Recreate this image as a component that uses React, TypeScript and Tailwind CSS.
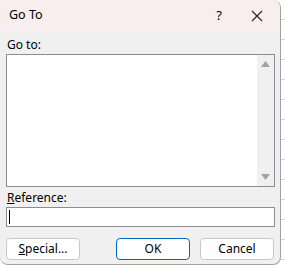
import React from "react";

export default function App() {
  return (
    <div
      className="relative w-[285px] h-[268px] bg-white overflow-hidden"
      style={{ fontFamily: '"Noto Sans", "Open Sans", sans-serif' }}
    >
      {/* excel grid sliver on the right */}
      <div className="absolute right-0 top-0 w-[5px] h-full flex flex-col">
        {Array.from({ length: 14 }).map((_, i) => (
          <div key={i} className="h-[20px] border-b border-[#d4d4d4] shrink-0" />
        ))}
      </div>
      {/* dialog */}
      <div className="relative w-[281px] h-[265px] bg-[#f0f0f0] border-r border-b border-[#a0a0a0] rounded-tr-[8px] rounded-br-[8px] rounded-bl-[8px] overflow-hidden flex flex-col text-[12px] text-black">
        <div className="h-[31px] bg-[#f9eeee] flex items-center shrink-0">
          <span className="ml-[9px] text-[12.5px]">Go To</span>
          <span className="ml-auto mr-[29px] text-[13px]">?</span>
          <svg width="12" height="12" viewBox="0 0 12 12" className="mr-[17px]">
            <path d="M1 1 L11 11 M11 1 L1 11" stroke="#222" strokeWidth="1.1" />
          </svg>
        </div>
        <div className="px-[6px] pt-[5px] flex flex-col">
          <div className="ml-[1px] h-[18px] leading-[18px]">Go to:</div>
          <div className="h-[133px] w-[269px] border border-[#8a8e92] bg-white flex">
            <div className="flex-1" />
            <div className="w-[17px] bg-[#f0f0f0] flex flex-col items-center justify-between py-[6px]">
              <svg width="9" height="6" viewBox="0 0 9 6">
                <path d="M0 6 L4.5 0 L9 6 Z" fill="#a3a3a3" />
              </svg>
              <svg width="9" height="6" viewBox="0 0 9 6">
                <path d="M0 0 L9 0 L4.5 6 Z" fill="#a3a3a3" />
              </svg>
            </div>
          </div>
          <div className="ml-[1px] mt-[2px] h-[18px] leading-[18px]">
            <span className="underline">R</span>eference:
          </div>
          <div className="h-[20px] w-[269px] border border-[#8a8e92] bg-white flex items-center">
            <div className="ml-[2px] w-[1px] h-[14px] bg-black" />
          </div>
          <div className="mt-[11px] flex items-center">
            <div className="w-[74px] h-[22px] rounded-[4px] border border-[#c8c8c8] bg-white flex items-center justify-center">
              <span>
                <span className="underline">S</span>pecial...
              </span>
            </div>
            <div className="ml-[36px] w-[74px] h-[22px] rounded-[4px] border border-[#0067c0] bg-white flex items-center justify-center">
              OK
            </div>
            <div className="ml-[10px] w-[74px] h-[22px] rounded-[4px] border border-[#c8c8c8] bg-white flex items-center justify-center">
              Cancel
            </div>
          </div>
        </div>
      </div>
    </div>
  );
}
